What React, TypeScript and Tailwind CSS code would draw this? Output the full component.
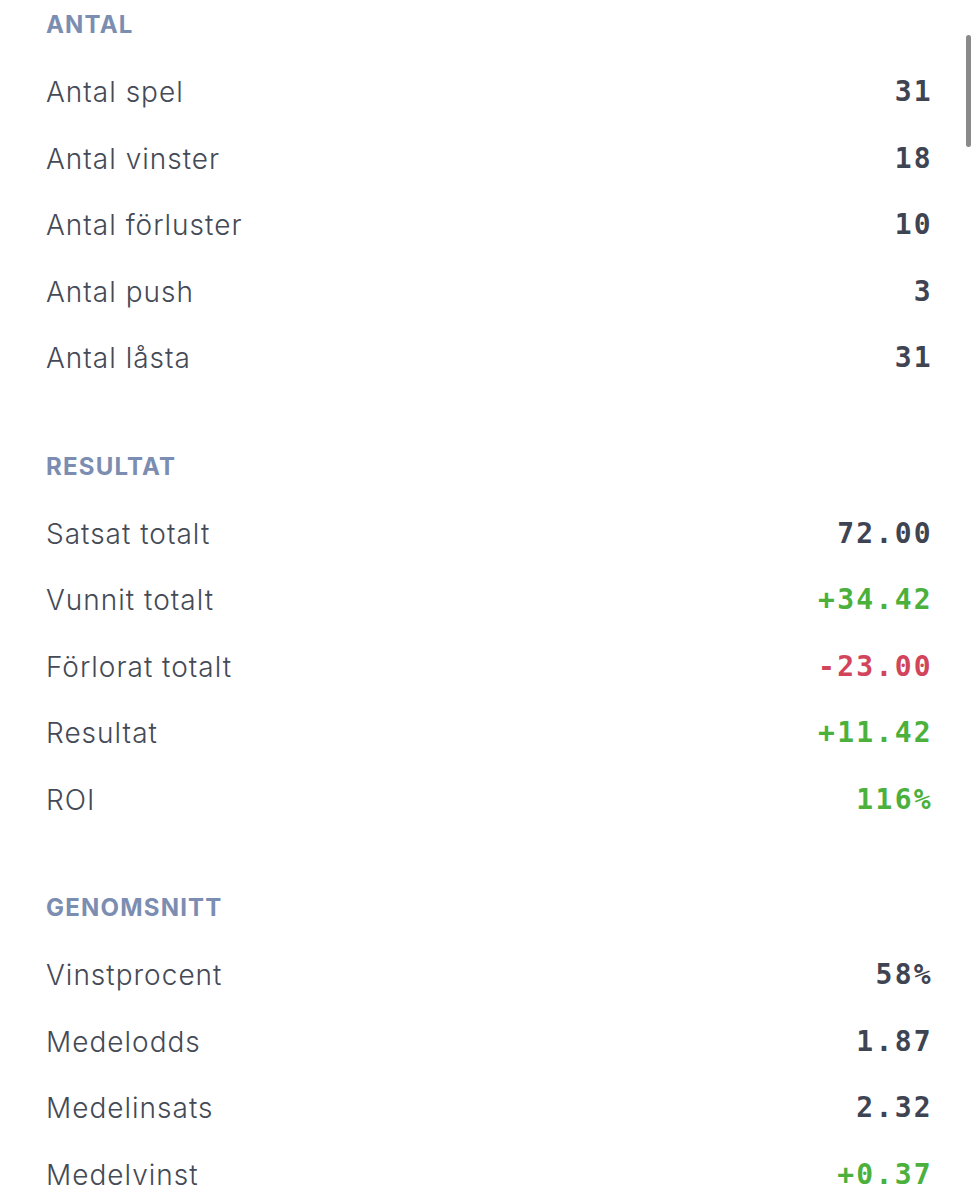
type Tone = "plain" | "pos" | "neg";

type Row = { label: string; value: string; tone?: Tone };

const sections: { title: string; rows: Row[] }[] = [
  {
    title: "ANTAL",
    rows: [
      { label: "Antal spel", value: "31" },
      { label: "Antal vinster", value: "18" },
      { label: "Antal förluster", value: "10" },
      { label: "Antal push", value: "3" },
      { label: "Antal låsta", value: "31" },
    ],
  },
  {
    title: "RESULTAT",
    rows: [
      { label: "Satsat totalt", value: "72.00" },
      { label: "Vunnit totalt", value: "+34.42", tone: "pos" },
      { label: "Förlorat totalt", value: "-23.00", tone: "neg" },
      { label: "Resultat", value: "+11.42", tone: "pos" },
      { label: "ROI", value: "116%", tone: "pos" },
    ],
  },
  {
    title: "GENOMSNITT",
    rows: [
      { label: "Vinstprocent", value: "58%" },
      { label: "Medelodds", value: "1.87" },
      { label: "Medelinsats", value: "2.32" },
      { label: "Medelvinst", value: "+0.37", tone: "pos" },
    ],
  },
];

const toneClass: Record<Tone, string> = {
  plain: "text-[#3f4453]",
  pos: "text-[#4bb03c]",
  neg: "text-[#d2445b]",
};

export default function App() {
  return (
    <div className="relative h-[1200px] w-[979px] overflow-hidden bg-white font-['Inter','Roboto',sans-serif]">
      {/* scrollbar thumb */}
      <div className="absolute right-[8px] top-[35px] h-[112px] w-[5px] rounded-full bg-[#8a8a8a]" />

      <div className="pl-[46px] pr-[46px]">
        {sections.map((s) => (
          <section key={s.title} className="mb-[50px]">
            <div className="mb-[9px] flex h-[50px] items-center">
              <h2 className="text-[24px] font-bold tracking-[1.2px] text-[#7b8db0]">{s.title}</h2>
            </div>
            {s.rows.map((r) => (
              <div key={r.label} className="flex h-[66.5px] items-center justify-between">
                <span className="text-[28px] font-light tracking-[1px] text-[#444a56]">{r.label}</span>
                <span
                  className={`font-['DejaVu_Sans_Mono',monospace] text-[28px] font-bold tracking-[2.3px] ${toneClass[r.tone ?? "plain"]}`}
                >
                  {r.value}
                </span>
              </div>
            ))}
          </section>
        ))}
      </div>
    </div>
  );
}
